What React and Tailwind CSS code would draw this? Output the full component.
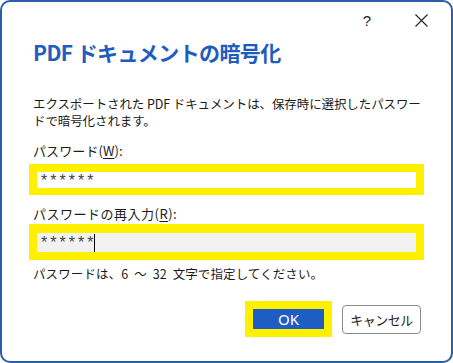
export default function App() {
  const jp = { fontFamily: '"Noto Sans CJK JP", "Noto Sans", sans-serif' };
  const lib = { fontFamily: '"Liberation Sans", sans-serif' };
  return (
    <div className="w-[453px] h-[363px] bg-white">
      <div
        className="w-[453px] h-[363px] border-2 border-[#2a5ea9] rounded-[10px] bg-white flex flex-col text-[#1b1b1b]"
        style={jp}
      >
        <div className="h-[36px] flex items-center justify-end shrink-0">
          <span className="text-[15px] leading-none mr-[44px] text-[#222]" style={lib}>?</span>
          <svg width="13" height="13" viewBox="0 0 13 13" className="mr-[23px]">
            <path d="M0.5 0.5 L12.5 12.5 M12.5 0.5 L0.5 12.5" stroke="#222" strokeWidth="1.1" fill="none" />
          </svg>
        </div>
        <div className="pl-[31px] pr-[30px] flex flex-col">
          <div className="text-[21px] leading-[28px] font-bold text-[#1f5cbf] tracking-[-0.6px]">
            PDF ドキュメントの暗号化
          </div>
          <div className="mt-[29px] text-[12.5px] leading-[17px] tracking-[-0.1px]">
            エクスポートされた PDF ドキュメントは、保存時に選択したパスワードで暗号化されます。
          </div>
          <div className="mt-[13px] text-[13px] leading-[17px] tracking-[0.1px]">
            パスワード(<span className="underline underline-offset-2">W</span>):
          </div>
          <div className="mt-[5px] -ml-[4px] w-[395px] h-[31px] bg-[#fff000] pt-[8px] px-[8px]">
            <div className="h-[16px] bg-white flex items-start pt-[1px] pl-[4px] text-[16px] leading-[16px] text-[#444] tracking-[3px]" style={lib}>
              ******
            </div>
          </div>
          <div className="mt-[10px] text-[13px] leading-[17px] tracking-[0.5px]">
            パスワードの再入力(<span className="underline underline-offset-2">R</span>):
          </div>
          <div className="mt-[2px] -ml-[4px] w-[395px] h-[36px] bg-[#fff000] pt-[9px] px-[8px]">
            <div className="h-[19px] bg-[#f2f2f2] flex items-start pt-[2px] pl-[4px] text-[16px] leading-[16px] text-[#444]" style={lib}>
              <span className="tracking-[3px]">******</span>
              <span className="w-px h-[18px] bg-black -ml-[2px] -mt-[1px]" />
            </div>
          </div>
          <div className="mt-[5px] text-[12.5px] leading-[17px] tracking-[0.1px] whitespace-pre">
            パスワードは、6<span className="inline-block w-[3px]" /> ～ <span className="inline-block w-[3px]" />32<span className="inline-block w-[3px]" /> 文字で指定してください。
          </div>
          <div className="mt-[19px] flex items-center justify-end gap-[10px] pr-0">
            <div className="w-[87px] h-[36px] bg-[#fff000] p-[8px]">
              <div className="h-[20px] bg-[#1f5cc4] text-white text-[15px] leading-[20px] text-center" style={{ fontFamily: '"Noto Sans", sans-serif' }}>
                OK
              </div>
            </div>
            <div className="w-[79px] h-[29px] border border-[#8c8c8c] rounded-[4px] bg-white text-[13px] leading-[27px] text-center tracking-[-0.5px]">
              キャンセル
            </div>
          </div>
        </div>
      </div>
    </div>
  );
}
